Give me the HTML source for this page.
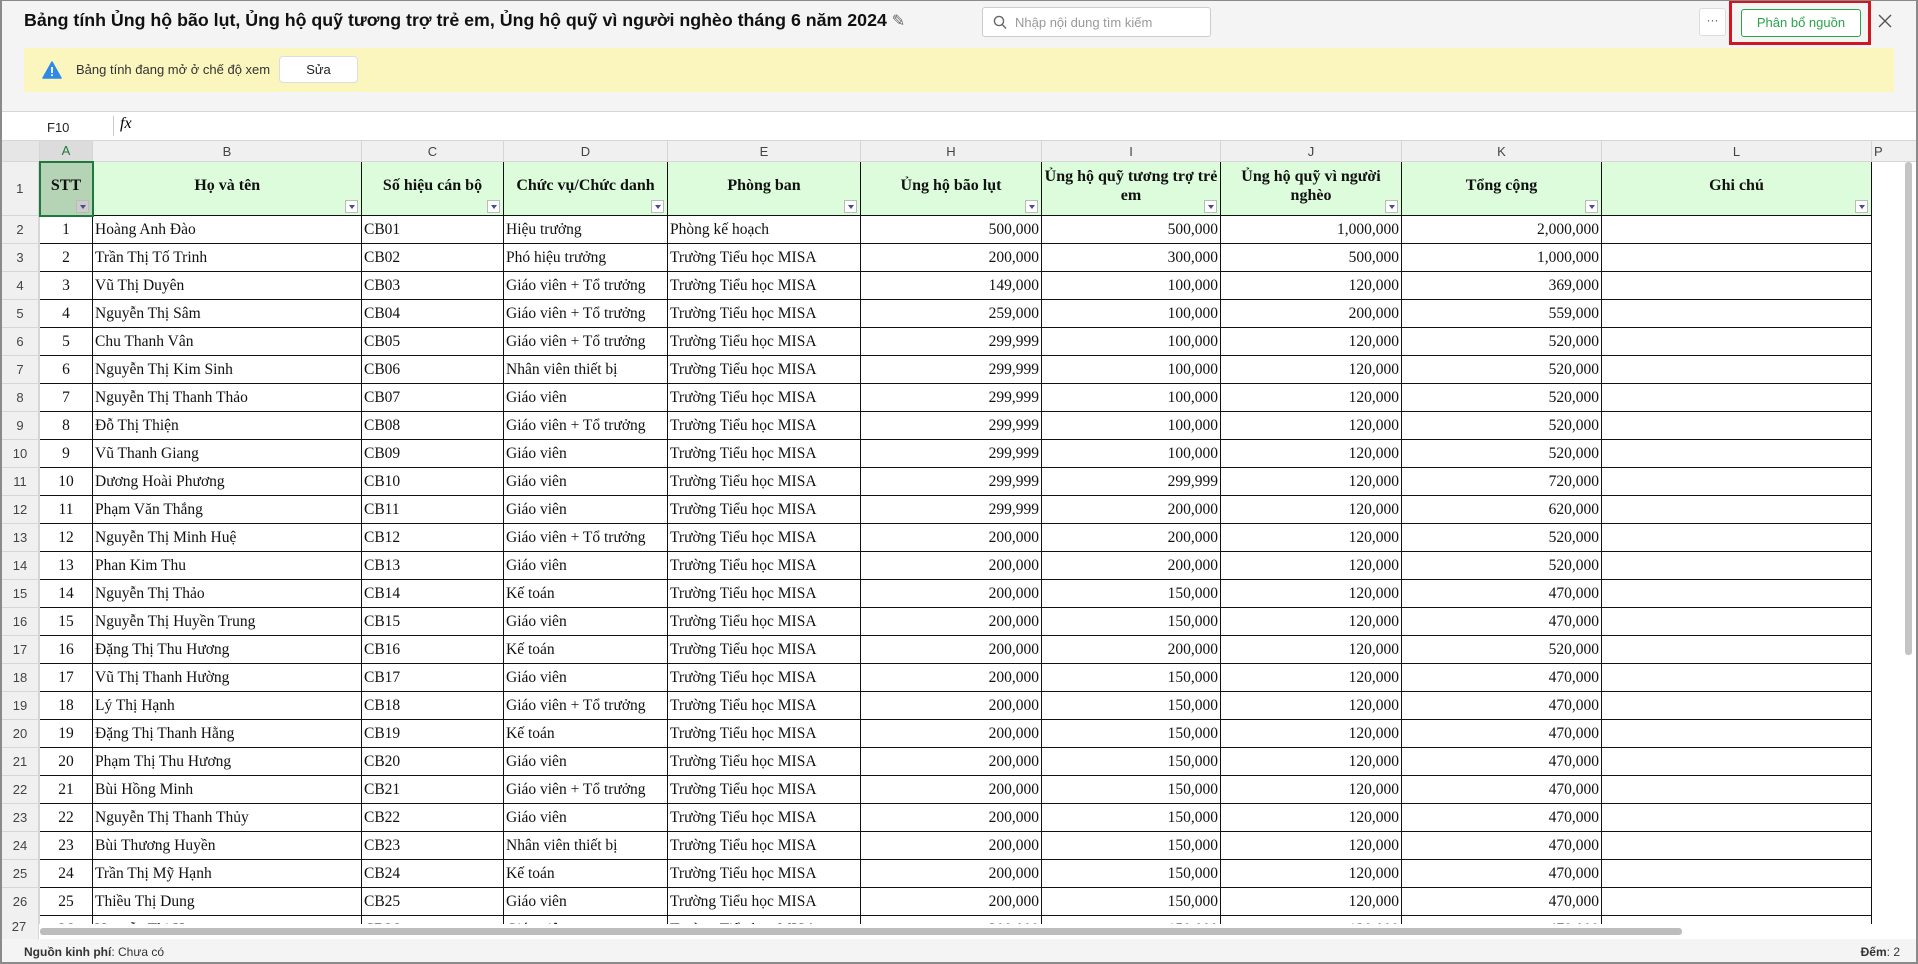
<!DOCTYPE html>
<html><head><meta charset="utf-8">
<style>
*{box-sizing:border-box;margin:0;padding:0}
body{width:1918px;height:964px;overflow:hidden;background:#f4f4f4;font-family:"Liberation Sans",sans-serif;position:relative}
.frame{position:absolute;inset:0;border:2px solid #8a8a8a;border-top-width:1px;pointer-events:none;z-index:50}
.title{position:absolute;left:24px;top:10px;font-size:17.8px;font-weight:bold;color:#111;white-space:nowrap}
.search{position:absolute;left:982px;top:7px;width:229px;height:30px;background:#fff;border:1px solid #ccc;border-radius:3px;font-size:13px;color:#999;padding:7px 0 0 32px}
.dots{position:absolute;left:1699px;top:8px;width:27px;height:28px;background:#fff;border:1px solid #ddd;border-radius:3px;font-size:12px;text-align:center;line-height:22px;color:#555}
.red{position:absolute;left:1729px;top:0;width:142px;height:45px;border:3px solid #d0161e}
.pbn{position:absolute;left:1741px;top:9px;width:120px;height:28px;background:#fff;border:1px solid #2aa34a;border-radius:3px;color:#2aa34a;font-size:13px;text-align:center;line-height:26px}
.banner{position:absolute;left:24px;top:48px;width:1870px;height:44px;background:#fbf6bd}
.banner .t{position:absolute;left:52px;top:14px;font-size:13px;color:#333}
.sua{position:absolute;left:255px;top:8px;width:79px;height:27px;background:#fff;border:1px solid #ddd;border-radius:4px;font-size:13px;text-align:center;line-height:25px;color:#222}
.fbar{position:absolute;left:0;top:111px;width:1918px;height:29px;background:#fff;border-top:1px solid #d5d5d5}
.grid{position:absolute;left:0;top:140px;width:1918px;height:785px;overflow:hidden;background:#fff}
table{border-collapse:collapse;table-layout:fixed;width:1918px;font-family:"Liberation Serif",serif;font-size:15.5px;color:#111}
td{border:1px solid #111;height:28px;padding:0 2px;white-space:nowrap;overflow:hidden}
tr.ch td{height:21px;background:#f0f0f0;border:1px solid #d6d6d6;font-family:"Liberation Sans",sans-serif;font-size:13px;color:#444;text-align:center}
td.rh{background:#f0f0f0;border-color:#d6d6d6;font-family:"Liberation Sans",sans-serif;font-size:13px;color:#444;text-align:center}
tr.hd td{height:54px;background:#dcfcdc;font-weight:bold;font-size:16px;text-align:center;position:relative;line-height:19px;padding-bottom:6px;white-space:normal}
tr.hd td.rh{font-weight:normal;font-size:13px;background:#f0f0f0;padding-bottom:0}
.f{position:absolute;right:3px;bottom:2px;width:13px;height:13px;background:#fff;border:1px solid #bbb}
.f:after{content:"";position:absolute;left:3px;top:4px;border-left:3px solid transparent;border-right:3px solid transparent;border-top:4px solid #4a4a8a}
td.n{text-align:right}
td.c{text-align:center}
td.e{border-top:none;border-bottom:none;border-right:none}
.status{position:absolute;left:0;top:939px;width:1918px;height:25px;background:#f4f4f4;font-size:12px;color:#333}
</style></head><body>
<div class="frame"></div>
<div class="title">Bảng tính Ủng hộ bão lụt, Ủng hộ quỹ tương trợ trẻ em, Ủng hộ quỹ vì người nghèo tháng 6 năm 2024 <span style="font-weight:normal;color:#666;font-size:16px">✎</span></div>
<div class="search"><svg style="position:absolute;left:10px;top:7px" width="14" height="15" viewBox="0 0 14 15"><circle cx="6" cy="6" r="4.6" fill="none" stroke="#666" stroke-width="1.4"/><path d="M9.3 9.6 L13 13.5" stroke="#666" stroke-width="1.4"/></svg>Nhập nội dung tìm kiếm</div>
<div class="dots">···</div>
<div class="red"></div>
<div class="pbn">Phân bổ nguồn</div>
<svg style="position:absolute;left:1878px;top:14px" width="14" height="14" viewBox="0 0 14 14"><path d="M1 1L13 13M13 1L1 13" stroke="#555" stroke-width="1.4"/></svg>
<div class="banner"><svg style="position:absolute;left:18px;top:13px" width="20" height="18" viewBox="0 0 20 18"><path d="M10 1 L19 17 L1 17 Z" fill="#2e8ae6" stroke="#2e8ae6" stroke-linejoin="round" stroke-width="1.5"/><rect x="9.1" y="6" width="1.8" height="6" fill="#fff"/><rect x="9.1" y="13.3" width="1.8" height="1.8" fill="#fff"/></svg><span class="t">Bảng tính đang mở ở chế độ xem</span><div class="sua">Sửa</div></div>
<div class="fbar"><span style="position:absolute;left:47px;top:8px;font-size:13px;color:#222">F10</span><span style="position:absolute;left:113px;top:4px;width:1px;height:20px;background:#ccc"></span><span style="position:absolute;left:120px;top:3px;font-family:'Liberation Serif',serif;font-style:italic;font-size:16px">fx</span></div>
<div class="grid">
<table>
<colgroup><col style="width:39px"><col style="width:53px"><col style="width:269px"><col style="width:142px"><col style="width:164px"><col style="width:193px"><col style="width:181px"><col style="width:179px"><col style="width:181px"><col style="width:200px"><col style="width:270px"><col style="width:47px"></colgroup>
<tr class="ch"><td style="background:#e6e6e6"></td><td style="background:#dcdcdc;color:#1e7a3c">A</td><td>B</td><td>C</td><td>D</td><td>E</td><td>H</td><td>I</td><td>J</td><td>K</td><td>L</td><td style="text-align:left">P</td></tr>
<tr class="hd"><td class="rh">1</td><td style="background:#b5d3b5;border:2px solid #1e7a3c">STT<span class="f" style="background:#ccc"></span></td><td>Họ và tên<span class="f"></span></td><td>Số hiệu cán bộ<span class="f"></span></td><td>Chức vụ/Chức danh<span class="f"></span></td><td>Phòng ban<span class="f"></span></td><td>Ủng hộ bão lụt<span class="f"></span></td><td>Ủng hộ quỹ tương trợ trẻ em<span class="f"></span></td><td>Ủng hộ quỹ vì người nghèo<span class="f"></span></td><td>Tổng cộng<span class="f"></span></td><td>Ghi chú<span class="f"></span></td><td class="e" style="background:#fff"></td></tr>
<tr><td class="rh">2</td><td class="c">1</td><td>Hoàng Anh Đào</td><td>CB01</td><td>Hiệu trưởng</td><td>Phòng kế hoạch</td><td class="n">500,000</td><td class="n">500,000</td><td class="n">1,000,000</td><td class="n">2,000,000</td><td></td><td class="e"></td></tr>
<tr><td class="rh">3</td><td class="c">2</td><td>Trần Thị Tố Trinh</td><td>CB02</td><td>Phó hiệu trưởng</td><td>Trường Tiểu học MISA</td><td class="n">200,000</td><td class="n">300,000</td><td class="n">500,000</td><td class="n">1,000,000</td><td></td><td class="e"></td></tr>
<tr><td class="rh">4</td><td class="c">3</td><td>Vũ Thị Duyên</td><td>CB03</td><td>Giáo viên + Tổ trưởng</td><td>Trường Tiểu học MISA</td><td class="n">149,000</td><td class="n">100,000</td><td class="n">120,000</td><td class="n">369,000</td><td></td><td class="e"></td></tr>
<tr><td class="rh">5</td><td class="c">4</td><td>Nguyễn Thị Sâm</td><td>CB04</td><td>Giáo viên + Tổ trưởng</td><td>Trường Tiểu học MISA</td><td class="n">259,000</td><td class="n">100,000</td><td class="n">200,000</td><td class="n">559,000</td><td></td><td class="e"></td></tr>
<tr><td class="rh">6</td><td class="c">5</td><td>Chu Thanh Vân</td><td>CB05</td><td>Giáo viên + Tổ trưởng</td><td>Trường Tiểu học MISA</td><td class="n">299,999</td><td class="n">100,000</td><td class="n">120,000</td><td class="n">520,000</td><td></td><td class="e"></td></tr>
<tr><td class="rh">7</td><td class="c">6</td><td>Nguyễn Thị Kim Sinh</td><td>CB06</td><td>Nhân viên thiết bị</td><td>Trường Tiểu học MISA</td><td class="n">299,999</td><td class="n">100,000</td><td class="n">120,000</td><td class="n">520,000</td><td></td><td class="e"></td></tr>
<tr><td class="rh">8</td><td class="c">7</td><td>Nguyễn Thị Thanh Thảo</td><td>CB07</td><td>Giáo viên</td><td>Trường Tiểu học MISA</td><td class="n">299,999</td><td class="n">100,000</td><td class="n">120,000</td><td class="n">520,000</td><td></td><td class="e"></td></tr>
<tr><td class="rh">9</td><td class="c">8</td><td>Đỗ Thị Thiện</td><td>CB08</td><td>Giáo viên + Tổ trưởng</td><td>Trường Tiểu học MISA</td><td class="n">299,999</td><td class="n">100,000</td><td class="n">120,000</td><td class="n">520,000</td><td></td><td class="e"></td></tr>
<tr><td class="rh">10</td><td class="c">9</td><td>Vũ Thanh Giang</td><td>CB09</td><td>Giáo viên</td><td>Trường Tiểu học MISA</td><td class="n">299,999</td><td class="n">100,000</td><td class="n">120,000</td><td class="n">520,000</td><td></td><td class="e"></td></tr>
<tr><td class="rh">11</td><td class="c">10</td><td>Dương Hoài Phương</td><td>CB10</td><td>Giáo viên</td><td>Trường Tiểu học MISA</td><td class="n">299,999</td><td class="n">299,999</td><td class="n">120,000</td><td class="n">720,000</td><td></td><td class="e"></td></tr>
<tr><td class="rh">12</td><td class="c">11</td><td>Phạm Văn Thắng</td><td>CB11</td><td>Giáo viên</td><td>Trường Tiểu học MISA</td><td class="n">299,999</td><td class="n">200,000</td><td class="n">120,000</td><td class="n">620,000</td><td></td><td class="e"></td></tr>
<tr><td class="rh">13</td><td class="c">12</td><td>Nguyễn Thị Minh Huệ</td><td>CB12</td><td>Giáo viên + Tổ trưởng</td><td>Trường Tiểu học MISA</td><td class="n">200,000</td><td class="n">200,000</td><td class="n">120,000</td><td class="n">520,000</td><td></td><td class="e"></td></tr>
<tr><td class="rh">14</td><td class="c">13</td><td>Phan Kim Thu</td><td>CB13</td><td>Giáo viên</td><td>Trường Tiểu học MISA</td><td class="n">200,000</td><td class="n">200,000</td><td class="n">120,000</td><td class="n">520,000</td><td></td><td class="e"></td></tr>
<tr><td class="rh">15</td><td class="c">14</td><td>Nguyễn Thị Thảo</td><td>CB14</td><td>Kế toán</td><td>Trường Tiểu học MISA</td><td class="n">200,000</td><td class="n">150,000</td><td class="n">120,000</td><td class="n">470,000</td><td></td><td class="e"></td></tr>
<tr><td class="rh">16</td><td class="c">15</td><td>Nguyễn Thị Huyền Trung</td><td>CB15</td><td>Giáo viên</td><td>Trường Tiểu học MISA</td><td class="n">200,000</td><td class="n">150,000</td><td class="n">120,000</td><td class="n">470,000</td><td></td><td class="e"></td></tr>
<tr><td class="rh">17</td><td class="c">16</td><td>Đặng Thị Thu Hương</td><td>CB16</td><td>Kế toán</td><td>Trường Tiểu học MISA</td><td class="n">200,000</td><td class="n">200,000</td><td class="n">120,000</td><td class="n">520,000</td><td></td><td class="e"></td></tr>
<tr><td class="rh">18</td><td class="c">17</td><td>Vũ Thị Thanh Hường</td><td>CB17</td><td>Giáo viên</td><td>Trường Tiểu học MISA</td><td class="n">200,000</td><td class="n">150,000</td><td class="n">120,000</td><td class="n">470,000</td><td></td><td class="e"></td></tr>
<tr><td class="rh">19</td><td class="c">18</td><td>Lý Thị Hạnh</td><td>CB18</td><td>Giáo viên + Tổ trưởng</td><td>Trường Tiểu học MISA</td><td class="n">200,000</td><td class="n">150,000</td><td class="n">120,000</td><td class="n">470,000</td><td></td><td class="e"></td></tr>
<tr><td class="rh">20</td><td class="c">19</td><td>Đặng Thị Thanh Hằng</td><td>CB19</td><td>Kế toán</td><td>Trường Tiểu học MISA</td><td class="n">200,000</td><td class="n">150,000</td><td class="n">120,000</td><td class="n">470,000</td><td></td><td class="e"></td></tr>
<tr><td class="rh">21</td><td class="c">20</td><td>Phạm Thị Thu Hương</td><td>CB20</td><td>Giáo viên</td><td>Trường Tiểu học MISA</td><td class="n">200,000</td><td class="n">150,000</td><td class="n">120,000</td><td class="n">470,000</td><td></td><td class="e"></td></tr>
<tr><td class="rh">22</td><td class="c">21</td><td>Bùi Hồng Minh</td><td>CB21</td><td>Giáo viên + Tổ trưởng</td><td>Trường Tiểu học MISA</td><td class="n">200,000</td><td class="n">150,000</td><td class="n">120,000</td><td class="n">470,000</td><td></td><td class="e"></td></tr>
<tr><td class="rh">23</td><td class="c">22</td><td>Nguyễn Thị Thanh Thủy</td><td>CB22</td><td>Giáo viên</td><td>Trường Tiểu học MISA</td><td class="n">200,000</td><td class="n">150,000</td><td class="n">120,000</td><td class="n">470,000</td><td></td><td class="e"></td></tr>
<tr><td class="rh">24</td><td class="c">23</td><td>Bùi Thương Huyền</td><td>CB23</td><td>Nhân viên thiết bị</td><td>Trường Tiểu học MISA</td><td class="n">200,000</td><td class="n">150,000</td><td class="n">120,000</td><td class="n">470,000</td><td></td><td class="e"></td></tr>
<tr><td class="rh">25</td><td class="c">24</td><td>Trần Thị Mỹ Hạnh</td><td>CB24</td><td>Kế toán</td><td>Trường Tiểu học MISA</td><td class="n">200,000</td><td class="n">150,000</td><td class="n">120,000</td><td class="n">470,000</td><td></td><td class="e"></td></tr>
<tr><td class="rh">26</td><td class="c">25</td><td>Thiều Thị Dung</td><td>CB25</td><td>Giáo viên</td><td>Trường Tiểu học MISA</td><td class="n">200,000</td><td class="n">150,000</td><td class="n">120,000</td><td class="n">470,000</td><td></td><td class="e"></td></tr>
<tr><td class="rh">27</td><td class="c">26</td><td>Nguyễn Thị Hoa</td><td>CB26</td><td>Giáo viên</td><td>Trường Tiểu học MISA</td><td class="n">200,000</td><td class="n">150,000</td><td class="n">120,000</td><td class="n">470,000</td><td></td><td class="e"></td></tr>
</table>
<div style="position:absolute;left:0;top:21px;width:39px;height:764px;border-right:1px solid #d6d6d6"></div>
<div style="position:absolute;left:1905px;top:22px;width:7px;height:493px;background:#c4c4c4;border-radius:3px"></div>
<div style="position:absolute;left:39px;top:784px;width:1879px;height:5px;background:#fff"></div>
</div>
<div style="position:absolute;left:39px;top:925px;width:1879px;height:14px;background:#fff"></div>
<div style="position:absolute;left:40px;top:928px;width:1642px;height:7px;background:#bdbdbd;border-radius:3px"></div>
<div style="position:absolute;left:0;top:915px;width:39px;height:24px;background:#f0f0f0;border-right:1px solid #d6d6d6;font-size:13px;color:#444;text-align:center;line-height:24px">27</div>
<div class="status"><span style="position:absolute;left:24px;top:6px"><b>Nguồn kinh phí</b>: Chưa có</span><span style="position:absolute;right:18px;top:6px"><b>Đếm</b>: 2</span></div>
</body></html>
